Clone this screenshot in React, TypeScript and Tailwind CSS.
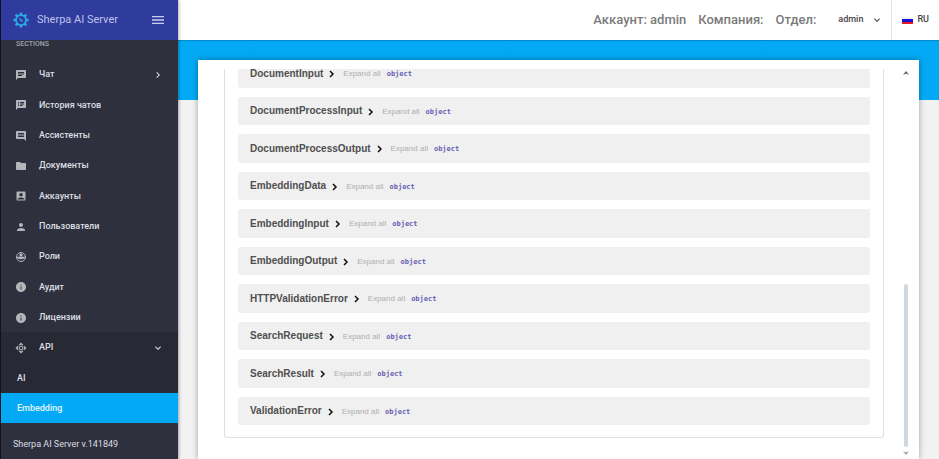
import {
  MdAccountBox,
  MdChat,
  MdComment,
  MdExpandMore,
  MdFolder,
  MdInfo,
  MdMenu,
  MdNavigateNext,
  MdPerson,
  MdSpeakerNotes,
} from "react-icons/md";
import type { ReactNode } from "react";

const sections: { label: string; icon: ReactNode; more?: boolean }[] = [
  { label: "Чат", icon: <MdChat />, more: true },
  { label: "История чатов", icon: <MdSpeakerNotes /> },
  { label: "Ассистенты", icon: <MdComment /> },
  { label: "Документы", icon: <MdFolder /> },
  { label: "Аккаунты", icon: <MdAccountBox /> },
  { label: "Пользователи", icon: <MdPerson /> },
  { label: "Роли", icon: <RoleIcon /> },
  { label: "Аудит", icon: <MdInfo /> },
  { label: "Лицензии", icon: <MdInfo /> },
];

const models = [
  "DocumentInput",
  "DocumentProcessInput",
  "DocumentProcessOutput",
  "EmbeddingData",
  "EmbeddingInput",
  "EmbeddingOutput",
  "HTTPValidationError",
  "SearchRequest",
  "SearchResult",
  "ValidationError",
];

function RoleIcon() {
  return (
    <svg viewBox="0 0 24 24" className="size-[1em]" fill="none" stroke="currentColor" strokeWidth="2">
      <circle cx="12" cy="12" r="9" />
      <circle cx="12" cy="8" r="3.500" fill="currentColor" stroke="none" />
      <path d="M3 11.500h18c-1 3.500-5 5-9 5s-8-1.500-9-5Z" fill="currentColor" stroke="none" />
    </svg>
  );
}

function ApiIcon() {
  return (
    <svg viewBox="0 0 24 24" className="size-[1em]" fill="currentColor">
      <path d="m12 1 4.500 4.500-2 2L12 5 9.500 7.500l-2-2zM12 23l-4.500-4.500 2-2L12 19l2.500-2.500 2 2zM1 12l4.500-4.500 2 2L5 12l2.500 2.500-2 2zM23 12l-4.500 4.500-2-2L19 12l-2.500-2.500 2-2z" />
      <circle cx="12" cy="12" r="3.500" fill="none" stroke="currentColor" strokeWidth="2" />
    </svg>
  );
}

function Logo() {
  return (
    <svg viewBox="0 0 32 32" className="size-4 shrink-0 text-[#28a9e8]" fill="none" stroke="currentColor">
      <circle cx="16" cy="16" r="10" strokeWidth="3.500" />
      <path
        d="M16 1v5M16 26v5M1 16h5M26 16h5M5.400 5.400l3.500 3.500M23.100 23.100l3.500 3.500M5.400 26.600l3.500-3.500M23.100 8.900l3.500-3.500"
        strokeWidth="5"
      />
      <path d="m13 13 6 6" strokeWidth="3" />
    </svg>
  );
}

function Sidebar() {
  return (
    <aside className="z-10 flex w-[178px] shrink-0 flex-col border-l border-[#11131c] bg-[#2e313d] text-[#dcdee3] shadow-[1px_0_3px_rgba(0,0,0,0.3)]">
      <div className="flex h-10 shrink-0 items-center bg-[#303c9d] pr-3 pl-3">
        <Logo />
        <span className="ml-2 flex-1 text-[11px] text-[#bcc3eb]">Sherpa AI Server</span>
        <button type="button" aria-label="Меню" className="text-base text-[#c9cef0]">
          <MdMenu />
        </button>
      </div>
      <h2 className="h-[19px] shrink-0 pl-[15px] text-[7px] leading-[9px] font-medium text-[#a2a4ab]">SECTIONS</h2>
      <nav className="flex flex-1 flex-col text-[9px] font-medium">
        {sections.map((s) => (
          <a key={s.label} href="#" className="flex flex-1 items-center px-3.5 pt-0.5">
            <span className="w-6 text-[12px] text-[#b4b6bc]">{s.icon}</span>
            <span className="flex-1">{s.label}</span>
            {s.more && <MdNavigateNext className="size-3" />}
          </a>
        ))}
        <a href="#" className="flex flex-1 items-center bg-[#272a34] px-3.5 pt-0.5">
          <span className="w-6 text-[12px] text-[#b4b6bc]">
            <ApiIcon />
          </span>
          <span className="flex-1">API</span>
          <MdExpandMore className="size-3" />
        </a>
        <a href="#" className="flex flex-1 items-center bg-[#272a34] pt-0.5 pl-4">
          AI
        </a>
        <a href="#" aria-current="page" className="flex flex-1 items-center bg-[#03a9f4] pt-0.5 pl-4 text-[#e4f6ff]">
          Embedding
        </a>
      </nav>
      <footer className="flex h-9 shrink-0 items-center pt-2 pl-3 text-[9px]">Sherpa AI Server v.141849</footer>
    </aside>
  );
}

function Header() {
  return (
    <header className="flex h-10 shrink-0 items-center justify-end bg-white">
      <div className="flex gap-3 text-[13px] font-medium text-[#7b7b7b]">
        <span>Аккаунт: admin</span>
        <span>Компания:</span>
        <span>Отдел:</span>
      </div>
      <button type="button" className="mr-2 ml-[22px] flex items-center gap-2 text-[9px] font-medium text-[#444]">
        admin
        <MdExpandMore className="size-3" />
      </button>
      <button
        type="button"
        className="flex h-full items-center gap-1 border-l border-[#e4e4e4] pr-2.5 pl-2.5 text-[9px] font-medium text-[#444]"
      >
        <svg viewBox="0 0 11 7" className="h-[7px] w-[11px]">
          <path fill="#f1f1f1" d="M0 0h11v2H0z" />
          <path fill="#1411d8" d="M0 2h11v3H0z" />
          <path fill="#e51624" d="M0 5h11v2H0z" />
        </svg>
        RU
      </button>
    </header>
  );
}

function Model({ name }: { name: string }) {
  return (
    <li className="flex items-center rounded-[3px] bg-[#f0f0f0] pl-3 font-['Liberation_Sans',sans-serif]">
      <button type="button" className="flex items-center text-[10px] font-bold text-[#4f4f4f]">
        {name}
        <svg viewBox="0 0 6 8" className="mt-0.5 ml-1.5 h-2 w-1.5" fill="none" stroke="#111" strokeWidth="1.5">
          <path d="m1 1 3 3-3 3" />
        </svg>
      </button>
      <button type="button" className="ml-2 pt-0.5 text-[8px] text-[#afafaf]">
        Expand all
      </button>
      <span className="ml-1.5 pt-0.5 font-['DejaVu_Sans_Mono',monospace] text-[7px] font-bold text-[#6660b4]">object</span>
    </li>
  );
}

export default function App() {
  return (
    <div className="flex h-screen overflow-hidden bg-[#f2f2f2] font-[Roboto,sans-serif]">
      <Sidebar />
      <div className="flex min-w-0 flex-1 flex-col">
        <Header />
        <main className="flex min-h-0 flex-1 bg-linear-to-b from-[#03a9f4] from-[60px] to-[#f2f2f2] to-[60px] pt-5 pr-5 pl-5 shadow-[inset_0_1px_1px_rgba(0,0,0,0.2)]">
          <div className="flex flex-1 bg-white pt-[9px] pl-[26px] shadow-[0_0_6px_rgba(0,0,0,0.35)]">
            <section className="mb-[21px] flex flex-1 flex-col overflow-hidden rounded-b-[3px] border border-t-0 border-[#dfdfdf] px-[13px] pb-3">
              <ul className="-mt-2.5 grid flex-1 auto-rows-fr gap-[9px]">
                {models.map((m) => (
                  <Model key={m} name={m} />
                ))}
              </ul>
            </section>
            <div className="flex w-[35px] flex-col items-center pb-0.5 pl-[9px] text-[#555]">
              <svg viewBox="0 0 8 8" className="size-2" fill="currentColor">
                <path d="m1 6 3-4 3 4-3-1.500z" />
              </svg>
              <div className="flex flex-1 flex-col justify-end">
                <div className="h-[44%] w-1 rounded-full bg-[#cfd8df]" />
              </div>
              <svg viewBox="0 0 8 8" className="mt-0.5 size-2" fill="#999">
                <path d="m1 2 3 4 3-4-3 1.500z" />
              </svg>
            </div>
          </div>
        </main>
      </div>
    </div>
  );
}
